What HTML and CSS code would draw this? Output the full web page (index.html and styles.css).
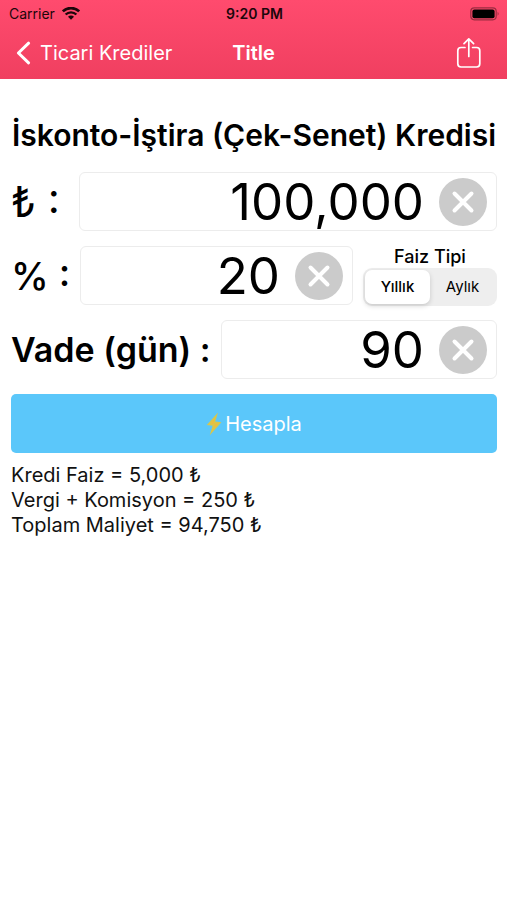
FILE: index.html
```html
<!DOCTYPE html>
<html lang="tr">
<head>
    <meta charset="UTF-8">
    <meta name="viewport" content="width=device-width, initial-scale=1.0">
    <title>Ticari Krediler</title>
    <link rel="stylesheet" href="styles.css">
</head>
<body>
    <header class="header">
        <div class="status-bar">
            <div class="carrier">
                <span>Carrier</span>
                <svg class="wifi" viewBox="0 0 18 13" width="18" height="13">
                    <path d="M0.8 4.4 A11.8 11.8 0 0 1 17.2 4.4" fill="none" stroke="#1c060a" stroke-width="2.7"/>
                    <path d="M3.6 7.5 A7.8 7.8 0 0 1 14.4 7.5" fill="none" stroke="#1c060a" stroke-width="2.4"/>
                    <path d="M6 9.8 A4.2 4.2 0 0 1 12 9.8 L9 12.8 Z" fill="#1c060a"/>
                </svg>
            </div>
            <span class="clock">9:20 PM</span>
            <svg class="battery" viewBox="0 0 30 14" width="30" height="14">
                <rect x="0.8" y="0.8" width="25.4" height="12" rx="3.5" fill="none" stroke="#9b2c40" stroke-width="1.2"/>
                <rect x="2.4" y="2.4" width="22.2" height="8.8" rx="2" fill="#000"/>
                <path d="M27.6 4.8 Q29.6 6.8 27.6 8.8 Z" fill="#9b2c40"/>
            </svg>
        </div>
        <nav class="nav-bar">
            <a class="back" href="#">
                <svg viewBox="0 0 15 24" width="15" height="24">
                    <path d="M12.6 2.2 L2.4 12 L12.6 21.8" fill="none" stroke="#fff" stroke-width="3" stroke-linecap="round" stroke-linejoin="round"/>
                </svg>
                <span>Ticari Krediler</span>
            </a>
            <span class="nav-title">Title</span>
            <button class="share" type="button" aria-label="Paylaş">
                <svg viewBox="0 0 26 32" width="26" height="32">
                    <g fill="none" stroke="#fff" stroke-width="1.7" stroke-linecap="round" stroke-linejoin="round">
                        <path d="M9 10.5 H5 Q1.8 10.5 1.8 13.7 V26.8 Q1.8 30 5 30 H20.6 Q23.8 30 23.8 26.8 V13.7 Q23.8 10.5 20.6 10.5 H16.6"/>
                        <path d="M12.8 19.5 V2 M8 6.6 L12.8 1.8 L17.6 6.6"/>
                    </g>
                </svg>
            </button>
        </nav>
    </header>
    <main class="content">
        <h1 class="heading">İskonto-İştira (Çek-Senet) Kredisi</h1>
        <form class="form">
            <div class="row">
                <label class="label label-amount" for="amount">₺ :</label>
                <div class="field">
                    <input id="amount" type="text" inputmode="numeric" value="100,000">
                    <button class="clear" type="button" aria-label="Temizle">
                        <svg viewBox="0 0 24 24" width="24" height="24"><path d="M3.5 3.5 L20.5 20.5 M20.5 3.5 L3.5 20.5" stroke="#fff" stroke-width="4" stroke-linecap="round"/></svg>
                    </button>
                </div>
            </div>
            <div class="row">
                <label class="label label-rate" for="rate">% :</label>
                <div class="field">
                    <input id="rate" type="text" inputmode="numeric" value="20">
                    <button class="clear" type="button" aria-label="Temizle">
                        <svg viewBox="0 0 24 24" width="24" height="24"><path d="M3.5 3.5 L20.5 20.5 M20.5 3.5 L3.5 20.5" stroke="#fff" stroke-width="4" stroke-linecap="round"/></svg>
                    </button>
                </div>
                <fieldset class="rate-type">
                    <legend>Faiz Tipi</legend>
                    <div class="segments">
                        <input id="yearly" type="radio" name="rate-type" checked>
                        <label for="yearly">Yıllık</label>
                        <input id="monthly" type="radio" name="rate-type">
                        <label for="monthly">Aylık</label>
                    </div>
                </fieldset>
            </div>
            <div class="row">
                <label class="label" for="term">Vade (gün) :</label>
                <div class="field">
                    <input id="term" type="text" inputmode="numeric" value="90">
                    <button class="clear" type="button" aria-label="Temizle">
                        <svg viewBox="0 0 24 24" width="24" height="24"><path d="M3.5 3.5 L20.5 20.5 M20.5 3.5 L3.5 20.5" stroke="#fff" stroke-width="4" stroke-linecap="round"/></svg>
                    </button>
                </div>
            </div>
            <button class="calculate" type="button">
                <svg viewBox="0 0 16 24" width="16" height="24">
                    <path d="M12 0.5 L0.8 13 L6.6 13.8 L3.8 23.2 L15.4 10.2 L9.2 9.4 Z" fill="#d9c64a"/>
                    <path d="M9 6.5 L4.8 11.4 L9.2 12 L7.4 17 L11.6 12 L7 11.2 Z" fill="#f3b93a"/>
                </svg>
                <span>Hesapla</span>
            </button>
        </form>
        <div class="results">
            <p>Kredi Faiz = 5,000 ₺</p>
            <p>Vergi + Komisyon = 250 ₺</p>
            <p>Toplam Maliyet = 94,750 ₺</p>
        </div>
    </main>
</body>
</html>
```
FILE: styles.css
```css
* {
    box-sizing: border-box;
}

body {
    margin: 0;
    font-family: Inter, "Noto Sans", sans-serif;
    color: #000;
    background-color: #fff;
}

button {
    border: none;
    padding: 0;
    background: none;
    font-family: inherit;
    cursor: pointer;
}

svg {
    display: block;
    flex-shrink: 0;
}

.header {
    background: linear-gradient(#ff4b6e, #f03f60);
}

.status-bar,
.nav-bar {
    display: grid;
    grid-template-columns: 1fr auto 1fr;
    align-items: center;
}

.status-bar {
    height: 27px;
    padding: 0 7px 0 9px;
    font-size: 14px;
    color: #1c060a;
}

.carrier {
    display: flex;
    align-items: center;
    gap: 7px;
}

.clock {
    font-weight: 600;
}

.battery {
    justify-self: end;
}

.nav-bar {
    height: 52px;
    padding: 0 16px;
    font-size: 20px;
    color: #fff;
}

.back {
    display: flex;
    align-items: center;
    gap: 9px;
    color: #fff;
    text-decoration: none;
    white-space: nowrap;
}

.nav-title {
    font-weight: 600;
}

.share {
    justify-self: end;
    padding-right: 9px;
}

.content {
    padding: 0 10px 0 11px;
}

.heading {
    margin: 0;
    padding: 36px 0 16px;
    font-size: 30px;
    line-height: 41px;
    font-weight: 600;
    text-align: center;
    white-space: nowrap;
}

.form {
    display: flex;
    flex-direction: column;
    gap: 15px;
}

.row {
    display: flex;
    align-items: center;
    gap: 10px;
    height: 59px;
}

.label {
    flex-shrink: 0;
    min-width: 58px;
    font-size: 34px;
    font-weight: 600;
    white-space: nowrap;
}

.label-amount {
    font-size: 42px;
    font-weight: 400;
}

.label-rate {
    font-size: 38px;
    font-weight: 500;
}

.field {
    display: flex;
    flex: 1;
    align-items: center;
    gap: 15px;
    min-width: 0;
    height: 100%;
    padding-right: 9px;
    border: 1px solid #ececec;
    border-radius: 6px;
}

.field input {
    flex: 1;
    width: 0;
    min-width: 0;
    height: 56px;
    padding: 0;
    border: none;
    outline: none;
    background: none;
    font-family: inherit;
    font-size: 51px;
    font-weight: 400;
    color: #000;
    text-align: right;
}

.clear {
    display: flex;
    flex-shrink: 0;
    align-items: center;
    justify-content: center;
    width: 48px;
    height: 48px;
    border-radius: 50%;
    background-color: #cbcbcb;
}

.rate-type {
    width: 134px;
    margin: 0;
    padding: 0;
    border: none;
}

.rate-type legend {
    width: 100%;
    padding: 0;
    font-size: 18px;
    line-height: 22px;
    font-weight: 500;
    text-align: center;
}

.segments {
    display: flex;
    height: 38px;
    padding: 2px;
    border-radius: 9px;
    background-color: #eee;
}

.segments input {
    appearance: none;
    width: 0;
    margin: 0;
}

.segments label {
    display: flex;
    flex: 1;
    align-items: center;
    justify-content: center;
    border-radius: 7px;
    font-size: 15px;
    font-weight: 400;
    cursor: pointer;
}

.segments input:checked + label {
    background-color: #fff;
    box-shadow: 0 2px 5px rgba(0, 0, 0, 0.16);
    font-weight: 500;
}

.calculate {
    display: flex;
    align-items: center;
    justify-content: center;
    gap: 3px;
    height: 59px;
    border-radius: 5px;
    background-color: #5bc7fa;
    font-size: 20px;
    color: #fff;
}

.results {
    padding-top: 10px;
    font-size: 20px;
    line-height: 25px;
    color: #111;
}

.results p {
    margin: 0;
}
```
